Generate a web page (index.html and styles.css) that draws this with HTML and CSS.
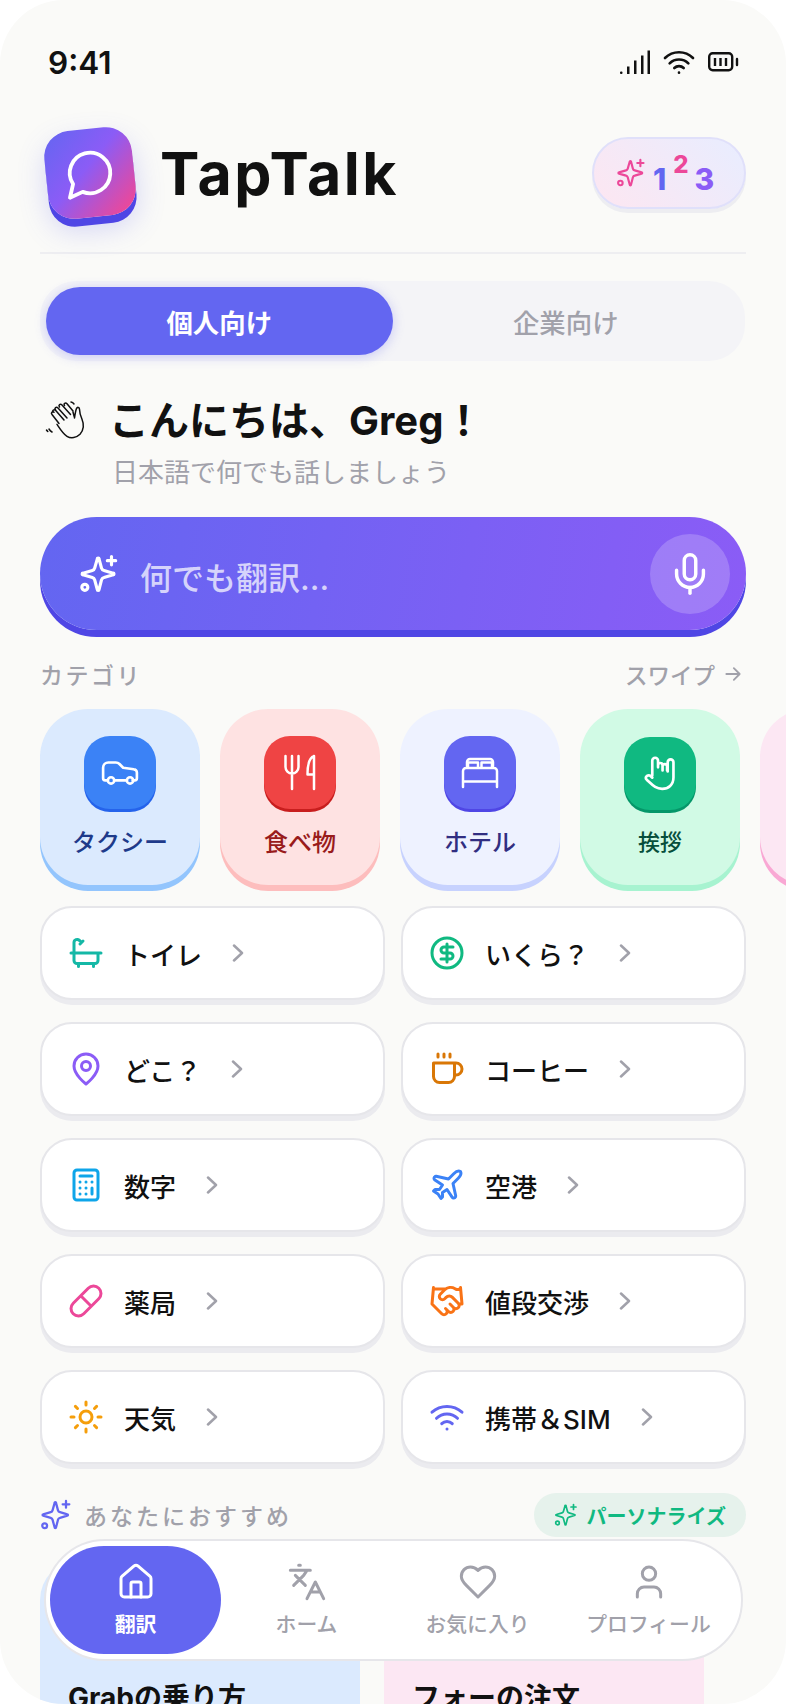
FILE: index.html
```html
<!DOCTYPE html>
<html lang="ja">
<head>
  <meta charset="UTF-8" />
  <title>TapTalk</title>
  <link rel="stylesheet" href="styles.css">
</head>
<body>
  <svg class="defs" width="0" height="0">
    <symbol id="sparkle" viewBox="0 0 24 24">
      <path d="M9.4 15.5A2 2 0 0 0 8 14.1l-5.6-1.6a.5.5 0 0 1 0-1L8 9.900A2 2 0 0 0 9.400 8.500l1.600-5.600a.5.5 0 0 1 1 0l1.500 5.600A2 2 0 0 0 15 9.900l5.500 1.600a.5.5 0 0 1 0 1L15 14.100a2 2 0 0 0-1.500 1.400l-1.500 5.900a.5.5 0 0 1-1 0z"/>
      <path d="M19.500 1.500v5M17 4h5"/>
      <circle cx="3.500" cy="20" r="1.800"/>
    </symbol>
  </svg>

  <div class="phone">
    <!-- Barra de estado -->
    <div class="status">
      <span class="time">9:41</span>
      <div class="status-icons">
        <svg width="30" height="24" viewBox="0 0 30 24" fill="#111">
          <rect x="0" y="21.500" width="2.500" height="2.500" rx="1"/>
          <rect x="7" y="16.500" width="2.500" height="7.500"/>
          <rect x="14" y="10.500" width="2.500" height="13.500"/>
          <rect x="21" y="5.500" width="2.500" height="18.500"/>
          <rect x="27.500" y="0.500" width="2.500" height="23.500"/>
        </svg>
        <svg width="32" height="24" viewBox="0 0 24 18" fill="none" stroke="#111" stroke-width="2" stroke-linecap="round">
          <path d="M1.500 6a15 15 0 0 1 21 0M5 10a10 10 0 0 1 14 0M8.500 13.500a5 5 0 0 1 7 0M12 17h.01"/>
        </svg>
        <svg width="31" height="20" viewBox="0 0 31 20" fill="none" stroke="#111">
          <rect x="1.200" y="1.200" width="23" height="17" rx="3.500" stroke-width="2.400"/>
          <path d="M7 6v8M12.500 6v8M18 6v8" stroke-width="2.400"/>
          <path d="M29 7v6" stroke-width="2.400" stroke-linecap="round"/>
        </svg>
      </div>
    </div>

    <!-- Cabecera -->
    <header class="header">
      <div class="brand">
        <div class="logo">
          <svg width="54" height="54" viewBox="0 0 24 24" fill="none" stroke="#fff" stroke-width="1.700" stroke-linecap="round" stroke-linejoin="round">
            <path d="M7.900 20A9 9 0 1 0 4 16.100L2 22Z"/>
          </svg>
        </div>
        <span class="brand-name">TapTalk</span>
      </div>
      <div class="numbers">
        <svg class="stroke-ico" width="30" height="30"><use href="#sparkle"/></svg>
        <span class="num num-1">1</span>
        <span class="num num-2">2</span>
        <span class="num num-3">3</span>
      </div>
    </header>

    <!-- Selector -->
    <div class="tabs">
      <div class="tab tab-active">個人向け</div>
      <div class="tab">企業向け</div>
    </div>

    <!-- Saludo -->
    <section class="greeting">
      <svg class="wave" width="42" height="42" viewBox="0 0 42 42" fill="none" stroke="#111" stroke-width="1.500" stroke-linecap="round" stroke-linejoin="round">
        <path d="M8 13c-1-1.500 1-3 2.500-1.800L19 21"/>
        <path d="M10.500 11c-1.500-2 .8-3.700 2.500-2l9 10"/>
        <path d="M14.500 8c-1.500-2 .8-3.600 2.500-2l8.500 9.500"/>
        <path d="M19.500 6.500c-1.300-2 1-3.300 2.500-1.800l6 7.300"/>
        <path d="M7 15.500c-1.500-1.500.5-3.500 2-2.200M7 15.500l7 9M28 13c.5 2 1 4 1.500 5.500M29.500 19c.5-3.500 1-7 2-9.500.8-1.800 3-1.300 3 .8 0 3 .8 6 2.500 10 2.500 6 1.500 11-2 15-3.500 3.500-9 4.500-13 2-4-2.500-7-7.500-10-12"/>
        <path d="M26 3c1.300.2 2.300 1 3 2M4 30c1 1.500 1.800 2.300 3 3M1.500 31c.4.600.8 1 1.300 1.500"/>
      </svg>
      <div>
        <h1 class="hello">こんにちは、Greg！</h1>
        <p class="hello-sub">日本語で何でも話しましょう</p>
      </div>
    </section>

    <!-- Buscador -->
    <div class="search">
      <svg class="stroke-ico search-spark" width="40" height="40"><use href="#sparkle"/></svg>
      <span class="search-text">何でも翻訳...</span>
      <div class="mic">
        <svg width="46" height="46" viewBox="0 0 24 24" fill="none" stroke="#fff" stroke-width="1.800" stroke-linecap="round" stroke-linejoin="round">
          <path d="M12 2a3 3 0 0 0-3 3v7a3 3 0 0 0 6 0V5a3 3 0 0 0-3-3Z"/>
          <path d="M19 10v2a7 7 0 0 1-14 0v-2"/>
          <path d="M12 19v3"/>
        </svg>
      </div>
    </div>

    <div class="section-head">
      <span class="section-label">カテゴリ</span>
      <span class="swipe">スワイプ
        <svg width="20" height="20" viewBox="0 0 24 24" fill="none" stroke="#a1a1aa" stroke-width="2.200" stroke-linecap="round" stroke-linejoin="round"><path d="M4 12h16M13 5l7 7-7 7"/></svg>
      </span>
    </div>

    <!-- Categorias -->
    <div class="cats">
      <div class="cat cat-blue">
        <div class="cat-ico">
          <svg width="38" height="26" viewBox="0 0 36 24" fill="none" stroke="#fff" stroke-width="2.500" stroke-linecap="round" stroke-linejoin="round">
            <path d="M6.500 19H4a2 2 0 0 1-2-2V7a5 5 0 0 1 5-5h7a5 5 0 0 1 3.500 1.500L21 7l10 1.500a3 3 0 0 1 3 3V17a2 2 0 0 1-2 2h-2M12.500 19h12"/>
            <circle cx="9.500" cy="19" r="3"/><circle cx="27.500" cy="19" r="3"/>
          </svg>
        </div>
        <span class="cat-name">タクシー</span>
      </div>
      <div class="cat cat-red">
        <div class="cat-ico">
          <svg width="32" height="37" viewBox="0 0 32 37" fill="none" stroke="#fff" stroke-width="2.500" stroke-linecap="round" stroke-linejoin="round">
            <path d="M1.500 2v11a6.500 6.500 0 0 0 13 0V2M8 2v33M30 2v33M30 2c-4 1.500-6.500 6-6.500 18.500H30"/>
          </svg>
        </div>
        <span class="cat-name">食べ物</span>
      </div>
      <div class="cat cat-indigo">
        <div class="cat-ico">
          <svg width="38" height="32" viewBox="0 0 38 32" fill="none" stroke="#fff" stroke-width="2.500" stroke-linecap="round" stroke-linejoin="round">
            <path d="M6 11V5a3 3 0 0 1 3-3h20a3 3 0 0 1 3 3v6M7 11V5.500h10V11M20.500 11V5.500H31V11M2 30V14a3 3 0 0 1 3-3h28a3 3 0 0 1 3 3v16M2 24.500h34"/>
          </svg>
        </div>
        <span class="cat-name">ホテル</span>
      </div>
      <div class="cat cat-green">
        <div class="cat-ico">
          <svg width="37" height="35" viewBox="0 0 36 34" fill="none" stroke="#fff" stroke-width="2.600" stroke-linecap="round" stroke-linejoin="round">
            <path d="M10 19V4.500a2.800 2.800 0 0 1 5.600 0V11M15.600 9a2.200 2.200 0 0 1 4.400 0v5M20 10a2.200 2.200 0 0 1 4.400 0v4M25 15V6a2.800 2.800 0 0 1 5.600 0v15c0 7-5 11-11 11-6.500 0-9.500-4-15-9-2-2 0-5 3-4l2.400 2"/>
          </svg>
        </div>
        <span class="cat-name cat-name-small">挨拶</span>
      </div>
      <div class="cat cat-pink"></div>
    </div>

    <!-- Accesos rapidos -->
    <div class="tiles">
      <div class="tile">
        <svg class="tile-ico" width="36" height="36" viewBox="0 0 24 24" stroke="#14b8a6"><path d="M10 4 8 6M17 19v2M2 12h20M7 19v2M9 5 7.600 3.600A2.100 2.100 0 0 0 4 5v12a2 2 0 0 0 2 2h12a2 2 0 0 0 2-2v-5"/></svg>
        <span class="tile-name">トイレ</span>
        <svg class="chev" width="12" height="18" viewBox="0 0 12 18"><path d="M2 1.500 10 9l-8 7.500"/></svg>
      </div>
      <div class="tile">
        <svg class="tile-ico" width="36" height="36" viewBox="0 0 24 24" stroke="#10b981"><circle cx="12" cy="12" r="10"/><path d="M16 8h-6a2 2 0 1 0 0 4h4a2 2 0 1 1 0 4H8M12 18V6"/></svg>
        <span class="tile-name">いくら？</span>
        <svg class="chev" width="12" height="18" viewBox="0 0 12 18"><path d="M2 1.500 10 9l-8 7.500"/></svg>
      </div>
      <div class="tile">
        <svg class="tile-ico" width="36" height="36" viewBox="0 0 24 24" stroke="#8b5cf6"><path d="M20 10c0 6-8 12-8 12s-8-6-8-12a8 8 0 0 1 16 0Z"/><circle cx="12" cy="10" r="3"/></svg>
        <span class="tile-name">どこ？</span>
        <svg class="chev" width="12" height="18" viewBox="0 0 12 18"><path d="M2 1.500 10 9l-8 7.500"/></svg>
      </div>
      <div class="tile">
        <svg class="tile-ico" width="36" height="36" viewBox="0 0 24 24" stroke="#d97706"><path d="M17 8h1a4 4 0 1 1 0 8h-1M3 8h14v9a4 4 0 0 1-4 4H7a4 4 0 0 1-4-4ZM6 2v2M10 2v2M14 2v2"/></svg>
        <span class="tile-name">コーヒー</span>
        <svg class="chev" width="12" height="18" viewBox="0 0 12 18"><path d="M2 1.500 10 9l-8 7.500"/></svg>
      </div>
      <div class="tile">
        <svg class="tile-ico" width="36" height="36" viewBox="0 0 24 24" stroke="#0ea5e9"><rect x="4" y="2" width="16" height="20" rx="2"/><path d="M8 6h8M16 14v4M16 10h.01M12 10h.01M8 10h.01M12 14h.01M8 14h.01M12 18h.01M8 18h.01"/></svg>
        <span class="tile-name">数字</span>
        <svg class="chev" width="12" height="18" viewBox="0 0 12 18"><path d="M2 1.500 10 9l-8 7.500"/></svg>
      </div>
      <div class="tile">
        <svg class="tile-ico" width="36" height="36" viewBox="0 0 24 24" stroke="#3b82f6"><path d="M17.800 19.200 16 11l3.500-3.500C21 6 21.500 4 21 3c-1-.5-3 0-4.500 1.500L13 8 4.800 6.200c-.5-.1-.9.1-1.100.5l-.3.5c-.2.5-.1 1 .3 1.300L9 12l-2 3H4l-1 1 3 2 2 3 1-1v-3l3-2 3.500 5.300c.3.4.8.5 1.300.3l.5-.2c.4-.3.6-.7.5-1.200z"/></svg>
        <span class="tile-name">空港</span>
        <svg class="chev" width="12" height="18" viewBox="0 0 12 18"><path d="M2 1.500 10 9l-8 7.500"/></svg>
      </div>
      <div class="tile">
        <svg class="tile-ico" width="36" height="36" viewBox="0 0 24 24" stroke="#ec4899"><path d="m10.500 20.500 10-10a4.950 4.950 0 1 0-7-7l-10 10a4.950 4.950 0 1 0 7 7ZM8.500 8.500l7 7"/></svg>
        <span class="tile-name">薬局</span>
        <svg class="chev" width="12" height="18" viewBox="0 0 12 18"><path d="M2 1.500 10 9l-8 7.500"/></svg>
      </div>
      <div class="tile">
        <svg class="tile-ico" width="36" height="36" viewBox="0 0 24 24" stroke="#f97316"><path d="m11 17 2 2a1 1 0 1 0 3-3M14 14l2.500 2.500a1 1 0 1 0 3-3l-3.880-3.880a3 3 0 0 0-4.240 0l-.88.88a1 1 0 1 1-3-3l2.810-2.810a5.790 5.790 0 0 1 7.060-.87l.47.28a2 2 0 0 0 1.420.25L21 4M21 3l1 11h-2M3 3 2 14l6.500 6.500a1 1 0 1 0 3-3M3 4h8"/></svg>
        <span class="tile-name">値段交渉</span>
        <svg class="chev" width="12" height="18" viewBox="0 0 12 18"><path d="M2 1.500 10 9l-8 7.500"/></svg>
      </div>
      <div class="tile">
        <svg class="tile-ico" width="36" height="36" viewBox="0 0 24 24" stroke="#f59e0b"><circle cx="12" cy="12" r="4"/><path d="M12 2v2M12 20v2M4.930 4.930l1.410 1.410M17.660 17.660l1.410 1.410M2 12h2M20 12h2M6.340 17.660l-1.410 1.410M19.070 4.930l-1.410 1.410"/></svg>
        <span class="tile-name">天気</span>
        <svg class="chev" width="12" height="18" viewBox="0 0 12 18"><path d="M2 1.500 10 9l-8 7.500"/></svg>
      </div>
      <div class="tile">
        <svg class="tile-ico" width="36" height="36" viewBox="0 0 24 24" stroke="#6366f1"><path d="M12 20h.01M2 8.820a15 15 0 0 1 20 0M5 12.860a10 10 0 0 1 14 0M8.500 16.430a5 5 0 0 1 7 0"/></svg>
        <span class="tile-name">携帯＆SIM</span>
        <svg class="chev" width="12" height="18" viewBox="0 0 12 18"><path d="M2 1.500 10 9l-8 7.500"/></svg>
      </div>
    </div>

    <!-- Recomendaciones -->
    <div class="rec-head">
      <div class="rec-title">
        <svg class="stroke-ico rec-spark" width="32" height="32"><use href="#sparkle"/></svg>
        <span class="rec-label">あなたにおすすめ</span>
      </div>
      <div class="rec-pill">
        <svg class="stroke-ico" width="24" height="24"><use href="#sparkle"/></svg>
        パーソナライズ
      </div>
    </div>

    <div class="rec-cards">
      <div class="rec-card rec-blue">Grabの乗り方</div>
      <div class="rec-card rec-pink">フォーの注文</div>
    </div>

    <!-- Navegacion inferior -->
    <nav class="nav">
      <div class="nav-item nav-active">
        <svg width="40" height="40" viewBox="0 0 24 24"><path d="M15 21v-8a1 1 0 0 0-1-1h-4a1 1 0 0 0-1 1v8"/><path d="M3 10a2 2 0 0 1 .7-1.500l7-6a2 2 0 0 1 2.600 0l7 6A2 2 0 0 1 21 10v9a2 2 0 0 1-2 2H5a2 2 0 0 1-2-2z"/></svg>
        <span>翻訳</span>
      </div>
      <div class="nav-item">
        <svg width="40" height="40" viewBox="0 0 24 24"><path d="m5 8 6 6M4 14l6-6 2-3M2 5h12M7 2h1M22 22l-5-10-5 10M14 18h6"/></svg>
        <span>ホーム</span>
      </div>
      <div class="nav-item">
        <svg width="40" height="40" viewBox="0 0 24 24"><path d="M19 14c1.500-1.500 3-3.200 3-5.500A5.500 5.500 0 0 0 16.500 3c-1.800 0-3 .5-4.500 2-1.500-1.500-2.700-2-4.500-2A5.500 5.500 0 0 0 2 8.500c0 2.300 1.500 4 3 5.500l7 7Z"/></svg>
        <span>お気に入り</span>
      </div>
      <div class="nav-item">
        <svg width="40" height="40" viewBox="0 0 24 24"><path d="M19 21v-2a4 4 0 0 0-4-4H9a4 4 0 0 0-4 4v2"/><circle cx="12" cy="7" r="4"/></svg>
        <span>プロフィール</span>
      </div>
    </nav>
  </div>
</body>
</html>
```

FILE: styles.css
```css
* {
  box-sizing: border-box;
}

body {
  margin: 0;
  background-color: #fff;
  color: #111;
  font-family: Inter, "Noto Sans CJK JP", sans-serif;
}

.defs {
  position: absolute;
}

.phone {
  position: relative;
  width: 786px;
  height: 1704px;
  overflow: hidden;
  background-color: #fafaf8;
  border-radius: 64px;
}

.stroke-ico {
  flex: none;
  fill: none;
  stroke: currentColor;
  stroke-width: 1.7;
  stroke-linecap: round;
  stroke-linejoin: round;
}

/* Barra de estado */
.status {
  display: flex;
  justify-content: space-between;
  align-items: center;
  height: 84px;
  padding: 40px 47px 0 48px;
}

.time {
  font-size: 31.5px;
  font-weight: 600;
}

.status-icons {
  display: flex;
  align-items: center;
  gap: 13px;
}

/* Cabecera */
.header {
  display: flex;
  justify-content: space-between;
  align-items: center;
  height: 126px;
  margin: 44px 40px 0;
  padding-bottom: 34px;
  border-bottom: 2px solid #eeeef1;
}

.brand {
  display: flex;
  align-items: center;
  gap: 26px;
  padding-left: 6px;
}

.logo {
  display: flex;
  justify-content: center;
  align-items: center;
  width: 88px;
  height: 88px;
  border-radius: 26px;
  background: linear-gradient(135deg, #6366f1 0%, #8b5cf6 45%, #ec4899 92%);
  box-shadow: 0 8px 0 #4f46e5, 0 12px 28px rgba(99, 102, 241, .25);
  transform: rotate(-6deg);
}

.brand-name {
  font-size: 59px;
  font-weight: 700;
  letter-spacing: 2.5px;
  color: #111;
}

.numbers {
  display: flex;
  align-items: center;
  width: 154px;
  height: 72px;
  padding-left: 22px;
  border: 2px solid #e0e0fa;
  border-radius: 36px;
  background: linear-gradient(45deg, #fde6f1, #e8edff);
  color: #ec4899;
  box-shadow: 0 4px 0 #ededf1;
}

.num {
  font-size: 30px;
  font-weight: 800;
  line-height: 1;
}

.num-1 {
  margin: 11px 0 0 7px;
  color: #6366f1;
}

.num-2 {
  margin: -17px 0 0 7px;
  font-size: 24px;
  color: #ec4899;
}

.num-3 {
  margin: 11px 0 0 6px;
  color: #8b5cf6;
}

/* Selector */
.tabs {
  display: flex;
  height: 80px;
  margin: 27px 41px 0 40px;
  padding: 6px;
  border-radius: 36px;
  background-color: #f4f4f7;
}

.tab {
  display: flex;
  justify-content: center;
  align-items: center;
  width: 347px;
  border-radius: 34px;
  font-size: 26.4px;
  font-weight: 500;
  color: #a1a1aa;
}

.tab-active {
  background-color: #6366f1;
  color: #fff;
  font-weight: 700;
  box-shadow: 0 2px 12px rgba(99, 102, 241, .3);
}

/* Saludo */
.greeting {
  display: flex;
  align-items: flex-start;
  gap: 22px;
  margin: 36px 40px 0;
  padding-left: 5px;
}

.wave {
  flex: none;
  margin-top: 2px;
}

.hello {
  margin: 0;
  font-size: 40px;
  line-height: 48px;
  font-weight: 700;
}

.hello-sub {
  margin: 10px 0 0 3px;
  font-size: 26px;
  line-height: 36px;
  color: #a1a1aa;
}

/* Buscador */
.search {
  display: flex;
  align-items: center;
  height: 113px;
  margin: 26px 40px 0;
  padding: 0 16px 0 39px;
  border-radius: 57px;
  background: linear-gradient(100deg, #6366f1, #8b5cf6);
  box-shadow: 0 7px 0 #4f46e5;
  color: #fff;
}

.search-spark {
  stroke-width: 1.9;
}

.search-text {
  flex: 1;
  margin-left: 21px;
  padding-top: 4px;
  font-size: 32px;
  font-weight: 500;
  color: rgba(255, 255, 255, .72);
}

.mic {
  display: flex;
  justify-content: center;
  align-items: center;
  width: 80px;
  height: 80px;
  border-radius: 50%;
  background-color: rgba(255, 255, 255, .2);
}

.section-head {
  display: flex;
  justify-content: space-between;
  align-items: center;
  height: 30px;
  margin: 29px 43px 0 40px;
}

.section-label {
  font-size: 23px;
  font-weight: 500;
  letter-spacing: 2.5px;
  color: #a1a1aa;
}

.swipe {
  display: flex;
  align-items: center;
  gap: 8px;
  font-size: 22.5px;
  font-weight: 500;
  color: #a1a1aa;
}

/* Categorias */
.cats {
  display: flex;
  gap: 20px;
  margin-top: 20px;
  padding-left: 40px;
}

.cat {
  flex: none;
  display: flex;
  flex-direction: column;
  align-items: center;
  width: 160px;
  height: 176px;
  padding-top: 27px;
  border-radius: 48px;
}

.cat-ico {
  display: flex;
  justify-content: center;
  align-items: center;
  width: 72px;
  height: 73px;
  border-radius: 26px;
}

.cat-name {
  margin-top: 17px;
  font-size: 24px;
  line-height: 34px;
  font-weight: 500;
}

.cat-name-small {
  margin-top: 15px;
  font-size: 22px;
}

.cat-blue {
  background-color: #dbeafe;
  box-shadow: 0 6px 0 #93c5fd;
  color: #1e3a8a;
}

.cat-blue .cat-ico {
  background-color: #3b82f6;
  box-shadow: 0 3px 0 #2563eb;
}

.cat-red {
  background-color: #fee2e2;
  box-shadow: 0 6px 0 #fdbdbd;
  color: #991b1b;
}

.cat-red .cat-ico {
  background-color: #ef4444;
  box-shadow: 0 3px 0 #c81e1e;
}

.cat-indigo {
  background-color: #eef2ff;
  box-shadow: 0 6px 0 #c7d2fe;
  color: #312e81;
}

.cat-indigo .cat-ico {
  background-color: #6366f1;
  box-shadow: 0 3px 0 #4f46e5;
}

.cat-green {
  background-color: #d1fae5;
  box-shadow: 0 6px 0 #a7f3d0;
  color: #064e3b;
}

.cat-green .cat-ico {
  margin-top: 1px;
  background-color: #10b981;
  box-shadow: 0 3px 0 #059669;
}

.cat-pink {
  background-color: #fce7f3;
  box-shadow: 0 6px 0 #f9a8d4;
}

/* Accesos rapidos */
.tiles {
  display: grid;
  grid-template-columns: 345px 345px;
  grid-auto-rows: 94px;
  gap: 22px 16px;
  margin: 21px 0 0 40px;
}

.tile {
  display: flex;
  align-items: center;
  padding-left: 26px;
  border: 2px solid #e6e6ea;
  border-radius: 32px;
  background-color: #fff;
  box-shadow: 0 5px 0 #ebebef;
}

.tile-ico {
  flex: none;
  margin-right: 20px;
  fill: none;
  stroke-width: 2;
  stroke-linecap: round;
  stroke-linejoin: round;
}

.tile-name {
  font-size: 26px;
  font-weight: 500;
}

.chev {
  margin-left: 30px;
  fill: none;
  stroke: #a1a1aa;
  stroke-width: 2.5;
  stroke-linecap: round;
  stroke-linejoin: round;
}

/* Recomendaciones */
.rec-head {
  display: flex;
  justify-content: space-between;
  align-items: center;
  height: 44px;
  margin: 29px 40px 0;
}

.rec-title {
  display: flex;
  align-items: center;
  gap: 12px;
}

.rec-spark {
  color: #6366f1;
}

.rec-label {
  font-size: 23px;
  font-weight: 500;
  letter-spacing: 3px;
  color: #a1a1aa;
}

.rec-pill {
  display: flex;
  align-items: center;
  gap: 9px;
  height: 44px;
  padding: 0 20px;
  border-radius: 22px;
  background-color: #e6f2ec;
  font-size: 20px;
  font-weight: 700;
  color: #10b981;
}

.rec-cards {
  display: flex;
  gap: 24px;
  margin: 23px 0 0 40px;
}

.rec-card {
  width: 320px;
  height: 200px;
  padding: 118px 0 0 28px;
  border-radius: 40px;
  font-size: 28px;
  line-height: 40px;
  font-weight: 700;
}

.rec-blue {
  background-color: #dbeafe;
}

.rec-pink {
  background-color: #fce7f3;
}

/* Navegacion inferior */
.nav {
  position: absolute;
  left: 44px;
  bottom: 43px;
  display: flex;
  width: 699px;
  height: 122px;
  padding: 5px 4px;
  border: 2px solid #e6e6ea;
  border-radius: 61px;
  background-color: #fff;
}

.nav-item {
  flex: none;
  display: flex;
  flex-direction: column;
  align-items: center;
  width: 171px;
  padding-top: 16px;
  border-radius: 54px;
  font-size: 20.8px;
  font-weight: 500;
  line-height: 28px;
  color: #a1a1aa;
}

.nav-item svg {
  margin-bottom: 9px;
  fill: none;
  stroke: currentColor;
  stroke-width: 1.8;
  stroke-linecap: round;
  stroke-linejoin: round;
}

.nav-active {
  background-color: #6366f1;
  color: #fff;
  font-weight: 700;
}
```
